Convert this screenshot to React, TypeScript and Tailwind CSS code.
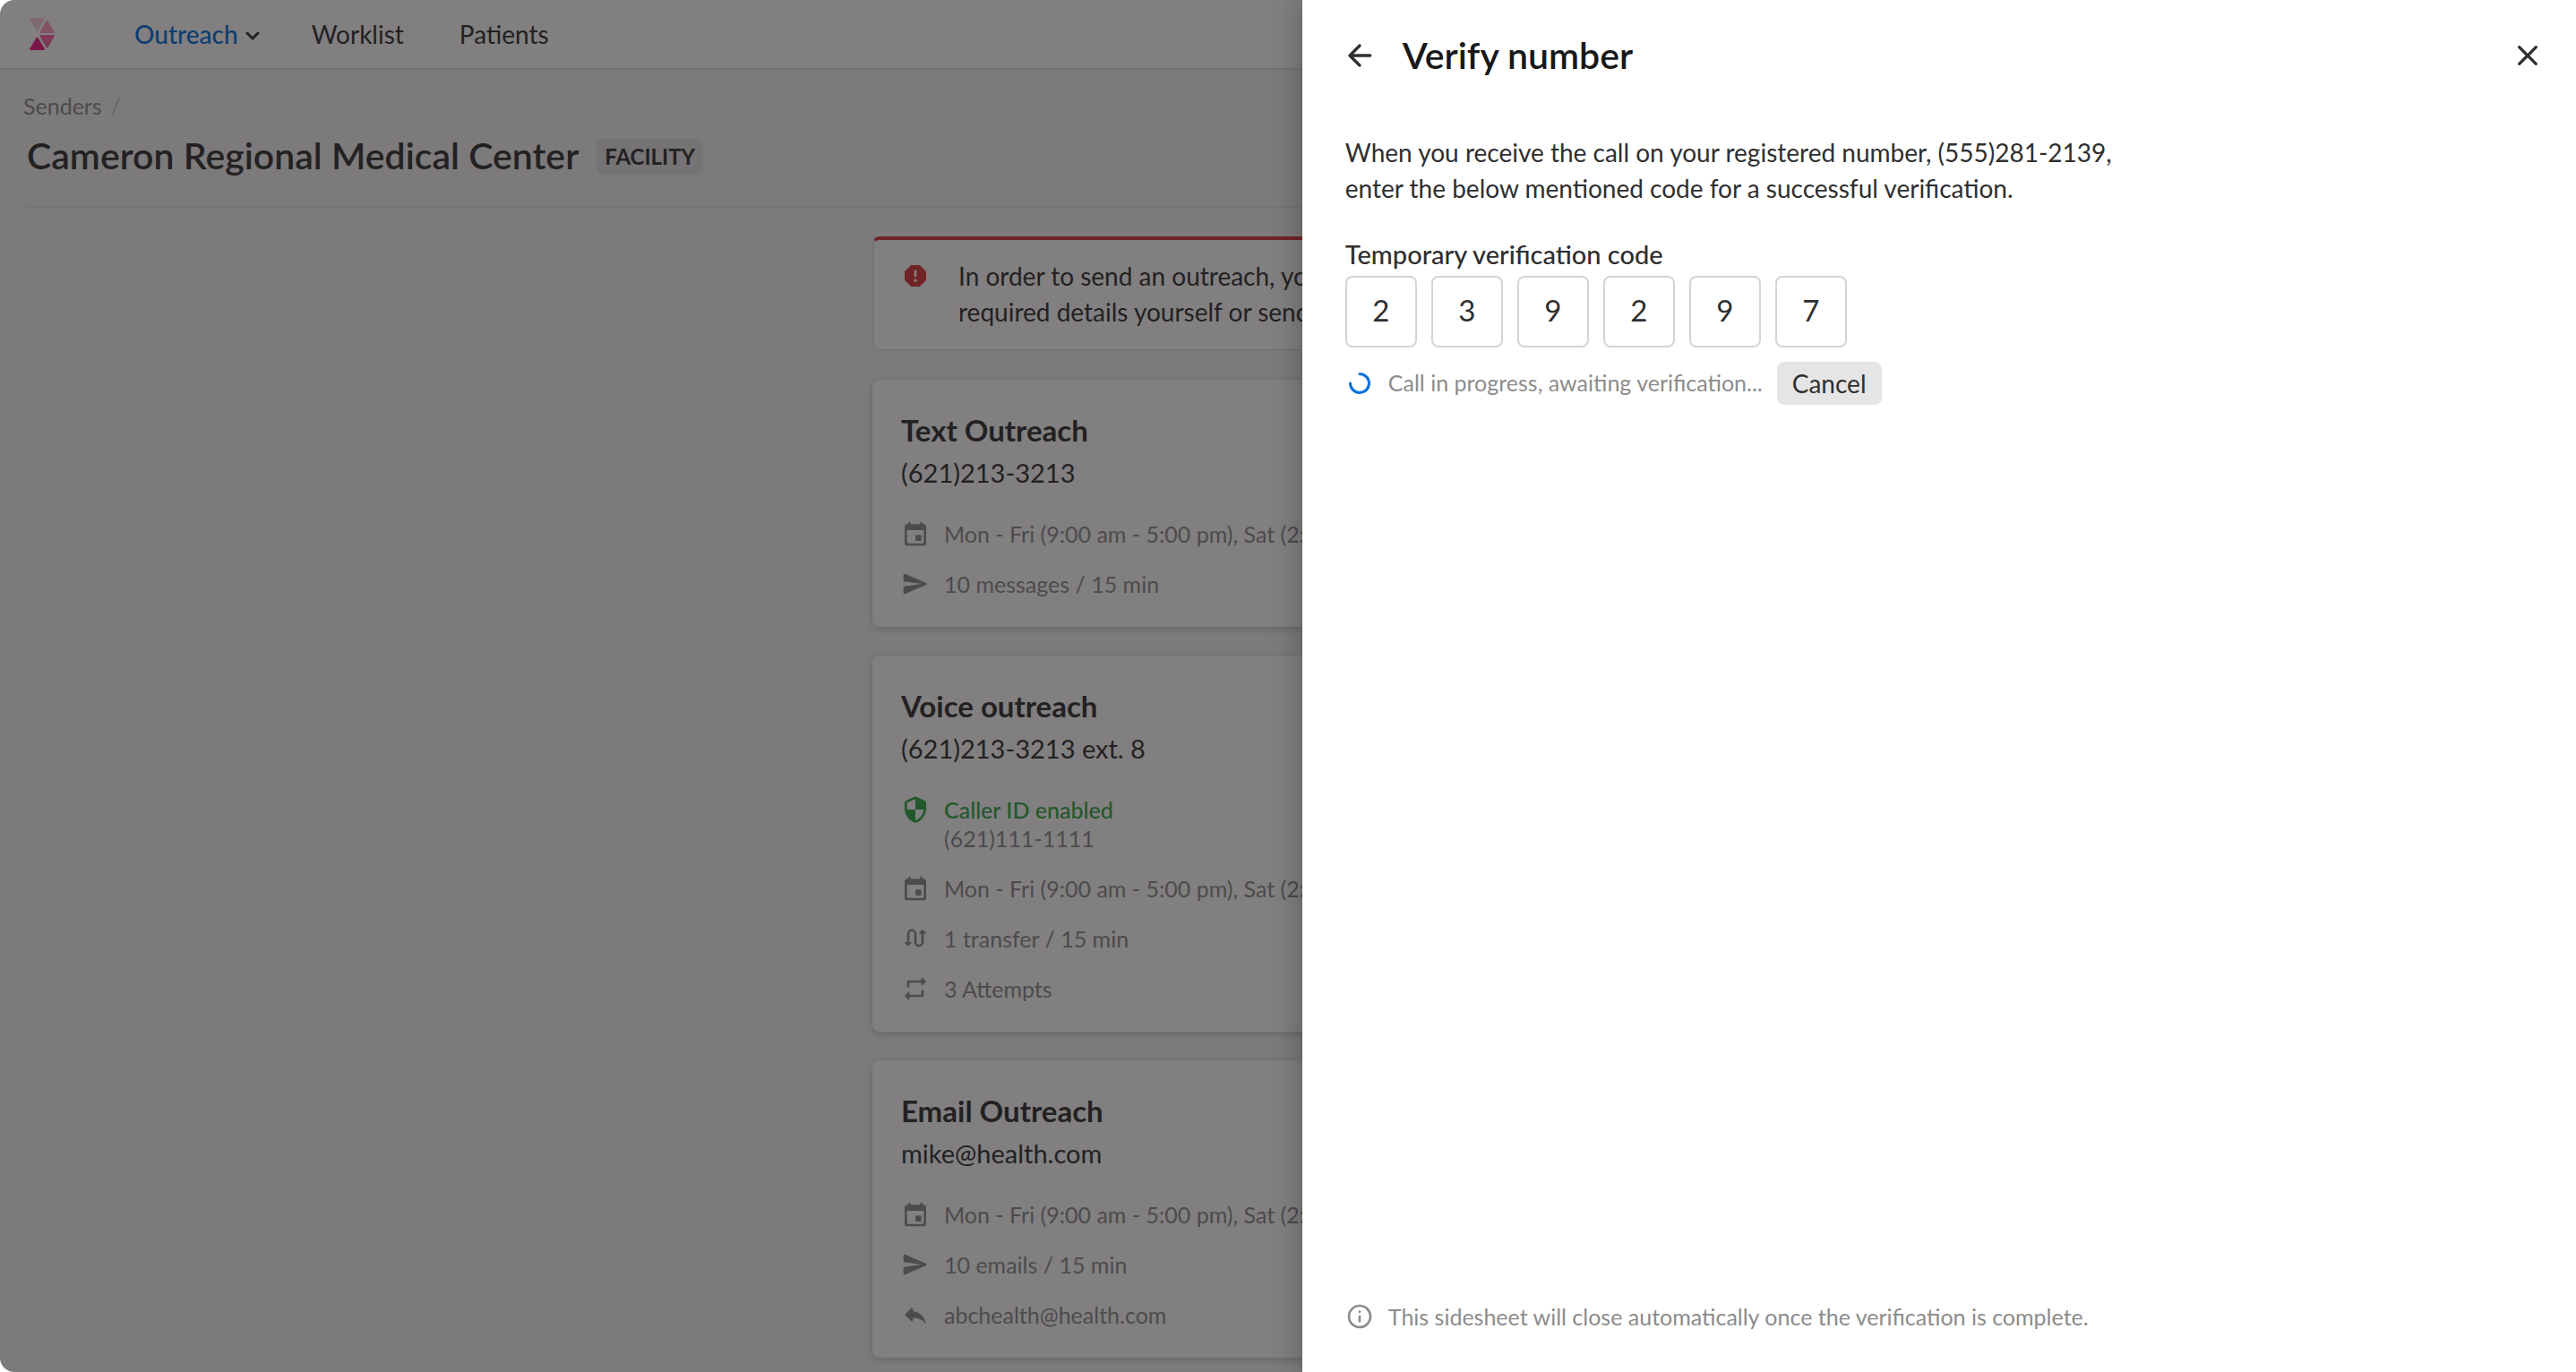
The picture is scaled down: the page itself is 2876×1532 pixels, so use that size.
import type { ReactNode } from 'react';

function Icon({ path, className = 'size-8' }: { path: string; className?: string }) {
  return (
    <svg viewBox="0 0 24 24" fill="currentColor" aria-hidden="true" className={`shrink-0 ${className}`}>
      <path d={path} />
    </svg>
  );
}

const paths = {
  event:
    'M16 13h-3c-.55 0-1 .45-1 1v3c0 .55.45 1 1 1h3c.55 0 1-.45 1-1v-3c0-.55-.45-1-1-1zm0-10v1H8V3c0-.55-.45-1-1-1s-1 .45-1 1v1H5c-1.110 0-1.990.9-1.990 2L3 20c0 1.100.89 2 2 2h14c1.100 0 2-.9 2-2V6c0-1.100-.9-2-2-2h-1V3c0-.55-.45-1-1-1s-1 .45-1 1zm2 17H6c-.55 0-1-.45-1-1V9h14v10c0 .55-.45 1-1 1z',
  send: 'M3.4 20.4l17.45-7.48c.81-.35.81-1.49 0-1.84L3.4 3.6c-.66-.29-1.39.2-1.39.91L2 9.12c0 .5.37.93.87.99L17 12 2.87 13.88c-.5.07-.87.5-.87 1l.01 4.61c0 .71.73 1.2 1.39.91z',
  reply:
    'M10 9V7.41c0-.89-1.08-1.34-1.71-.71L3.7 11.29c-.39.39-.39 1.02 0 1.41l4.59 4.59c.63.63 1.71.19 1.71-.7V14.9c5 0 8.5 1.6 11 5.1-1-5-4-10-11-11z',
  repeat:
    'M7 7h10v1.79c0 .45.54.67.85.35l2.79-2.79c.2-.2.2-.51 0-.71l-2.79-2.79c-.31-.31-.85-.09-.85.36V5H6c-.55 0-1 .45-1 1v4c0 .55.45 1 1 1s1-.45 1-1V7zm10 10H7v-1.79c0-.45-.54-.67-.85-.35l-2.79 2.79c-.2.2-.2.51 0 .71l2.79 2.79c.31.31.85.09.85-.36V19h11c.55 0 1-.45 1-1v-4c0-.55-.45-1-1-1s-1 .45-1 1v3z',
  report:
    'M15.32 3H8.68c-.26 0-.52.11-.7.29L3.29 7.98c-.18.18-.29.44-.29.7v6.63c0 .27.11.52.29.71l4.68 4.68c.19.19.45.3.71.3h6.63c.27 0 .52-.11.71-.29l4.68-4.68c.19-.19.29-.44.29-.71V8.68c0-.27-.11-.52-.29-.71l-4.68-4.68c-.18-.18-.44-.29-.7-.29zM12 17.3c-.72 0-1.3-.58-1.3-1.3s.58-1.3 1.3-1.3 1.3.58 1.3 1.3-.58 1.3-1.3 1.3zm0-4.3c-.55 0-1-.45-1-1V8c0-.55.45-1 1-1s1 .45 1 1v4c0 .55-.45 1-1 1z',
  security:
    'M11.19 1.36l-7 3.11C3.47 4.79 3 5.51 3 6.3V11c0 5.55 3.84 10.74 9 12 5.16-1.26 9-6.45 9-12V6.3c0-.79-.47-1.51-1.19-1.83l-7-3.11c-.51-.23-1.11-.23-1.62 0zM12 11.99h7c-.53 4.12-3.28 7.79-7 8.94V12H5V6.3l7-3.11v8.8z',
  info: 'M12 7c.55 0 1 .45 1 1s-.45 1-1 1-1-.45-1-1 .45-1 1-1zm0 4c.55 0 1 .45 1 1v4c0 .55-.45 1-1 1s-1-.45-1-1v-4c0-.55.45-1 1-1zm0-9C6.48 2 2 6.48 2 12s4.48 10 10 10 10-4.48 10-10S17.52 2 12 2zm0 18c-4.41 0-8-3.59-8-8s3.59-8 8-8 8 3.59 8 8-3.59 8-8 8z',
  back: 'M19 11H7.83l4.88-4.88c.39-.39.39-1.03 0-1.42-.39-.39-1.02-.39-1.41 0l-6.59 6.59c-.39.39-.39 1.02 0 1.41l6.59 6.59c.39.39 1.02.39 1.41 0 .39-.39.39-1.02 0-1.41L7.83 13H19c.55 0 1-.45 1-1s-.45-1-1-1z',
  close:
    'M18.3 5.71c-.39-.39-1.02-.39-1.41 0L12 10.59 7.11 5.7c-.39-.39-1.02-.39-1.41 0-.39.39-.39 1.02 0 1.41L10.59 12 5.7 16.89c-.39.39-.39 1.02 0 1.41.39.39 1.02.39 1.41 0L12 13.41l4.89 4.89c.39.39 1.02.39 1.41 0 .39-.39.39-1.02 0-1.41L13.41 12l4.89-4.89c.38-.38.38-1.02 0-1.4z',
};

function TransferIcon() {
  return (
    <svg viewBox="0 0 24 24" fill="none" aria-hidden="true" className="size-8 shrink-0">
      <path d="M6 16V8a3 3 0 0 1 6 0v7a3 3 0 0 0 6 0V7" stroke="currentColor" strokeWidth="2" />
      <path
        d="M3.6 15h4.8c.5 0 .7.5.35.85l-2.4 2.4c-.2.2-.5.2-.7 0l-2.4-2.4C2.9 15.5 3.1 15 3.6 15zM15.6 8h4.8c.5 0 .7-.5.35-.85l-2.4-2.4c-.2-.2-.5-.2-.7 0l-2.4 2.4c-.35.35-.15.85.35.85z"
        fill="currentColor"
      />
    </svg>
  );
}

function Logo() {
  return (
    <svg viewBox="0 0 30 38" aria-hidden="true" className="h-[38px] w-[30px]" strokeLinejoin="round" strokeWidth="2">
      <path d="M2 2H17L9.5 14.5Z" fill="#ffcfe0" stroke="#ffcfe0" />
      <path d="M20.5 4.5L28 17H13.5Z" fill="#ff9fc4" stroke="#ff9fc4" />
      <path d="M13.5 21H28L20.5 33.5Z" fill="#fb62a6" stroke="#fb62a6" />
      <path d="M9.5 23.5L17 36H2Z" fill="#f41b85" stroke="#f41b85" />
    </svg>
  );
}

function Detail({ icon, children }: { icon: ReactNode; children: ReactNode }) {
  return (
    <li className="flex items-start gap-4">
      {icon}
      <div className="leading-8">{children}</div>
    </li>
  );
}

function Card({ title, contact, children }: { title: string; contact: string; children: ReactNode }) {
  return (
    <section className="rounded-lg bg-white p-8 shadow-[0_2px_8px_rgba(0,0,0,0.2)]">
      <h2 className="text-[33px] leading-12 font-bold text-[#2f2f2f]">{title}</h2>
      <p className="mt-1 text-[29px] leading-10">{contact}</p>
      <ul className="mt-8 flex flex-col gap-6 text-[25px] text-[#8c8c8c]">{children}</ul>
    </section>
  );
}

const hours = 'Mon - Fri (9:00 am - 5:00 pm), Sat (2:00 pm - 5:00 pm)';

function SendersPage() {
  return (
    <div className="min-h-screen bg-[#f4f4f4]">
      <header className="flex items-center border-b-2 border-[#e5e5e5] bg-white px-8">
        <Logo />
        <nav className="ml-[88px] flex h-[76px] items-center text-[28px] leading-10">
          <button type="button" className="flex items-center gap-2 font-medium text-[#0070dd]">
            Outreach
            <svg viewBox="0 0 16 10" aria-hidden="true" className="mt-1 h-2.5 w-4 text-[#2f2f2f]" fill="none">
              <path d="M2 2l6 6 6-6" stroke="currentColor" strokeWidth="3" strokeLinecap="round" strokeLinejoin="round" />
            </svg>
          </button>
          <a href="#worklist" className="ml-[58px]">Worklist</a>
          <a href="#patients" className="ml-[62px]">Patients</a>
        </nav>
      </header>

      <div className="px-[30px] pt-6">
        <nav aria-label="Breadcrumb" className="-ml-1 flex gap-2.5 text-[25px] leading-8 text-[#8c8c8c]">
          <a href="#senders">Senders</a>
          <span className="text-[#c8c8c8]">/</span>
        </nav>
        <div className="mt-5 flex items-center gap-5 border-b-2 border-[#e5e5e5] pb-[34px]">
          <h1 className="pb-0.5 text-[41px] leading-10 font-semibold">Cameron Regional Medical Center</h1>
          <span className="rounded-lg bg-[#e5e5e5] px-[9px] text-2xl leading-10 font-bold">FACILITY</span>
        </div>
      </div>

      <main className="mx-auto mt-8 flex max-w-[928px] flex-col gap-8 pb-4">
        <div
          role="alert"
          className="flex items-start gap-8 rounded-lg border-2 border-t-4 border-[#e5e5e5] border-t-[#d93737] bg-white px-[30px] pt-5 pb-[22px] text-[28px] leading-10"
        >
          <Icon path={paths.report} className="mt-1 size-8 text-[#d93737]" />
          <p>
            In order to send an outreach, you need to fill in the
            <br />
            required details yourself or send a request.
          </p>
        </div>

        <Card title="Text Outreach" contact="(621)213-3213">
          <Detail icon={<Icon path={paths.event} />}>{hours}</Detail>
          <Detail icon={<Icon path={paths.send} />}>10 messages / 15 min</Detail>
        </Card>

        <Card title="Voice outreach" contact="(621)213-3213 ext. 8">
          <Detail icon={<Icon path={paths.security} className="size-8 text-[#2ea843]" />}>
            <p className="font-medium text-[#2ea843]">Caller ID enabled</p>
            <p>(621)111-1111</p>
          </Detail>
          <Detail icon={<Icon path={paths.event} />}>{hours}</Detail>
          <Detail icon={<TransferIcon />}>1 transfer / 15 min</Detail>
          <Detail icon={<Icon path={paths.repeat} />}>3 Attempts</Detail>
        </Card>

        <Card title="Email Outreach" contact="mike@health.com">
          <Detail icon={<Icon path={paths.event} />}>{hours}</Detail>
          <Detail icon={<Icon path={paths.send} />}>10 emails / 15 min</Detail>
          <Detail icon={<Icon path={paths.reply} />}>abchealth@health.com</Detail>
        </Card>
      </main>
    </div>
  );
}

const code = ['2', '3', '9', '2', '9', '7'];

function VerifySheet() {
  return (
    <aside
      role="dialog"
      aria-labelledby="sheet-title"
      className="flex w-[49.45%] flex-col bg-white pt-[38px] pr-[34px] pb-[46px] pl-12 shadow-[0_0_32px_rgba(0,0,0,0.3)]"
    >
      <header className="flex items-center">
        <button type="button" aria-label="Back" className="-ml-1">
          <Icon path={paths.back} className="size-10" />
        </button>
        <h2 id="sheet-title" className="ml-7 text-[41px] leading-12 font-semibold text-[#181818]">
          Verify number
        </h2>
        <button type="button" aria-label="Close" className="ml-auto">
          <Icon path={paths.close} className="size-10" />
        </button>
      </header>

      <p className="mt-16 max-w-[920px] text-[28px] leading-10">
        When you receive the call on your registered number, (555)281-2139,
        <br />
        enter the below mentioned code for a successful verification.
      </p>

      <fieldset className="mt-[34px]">
        <legend className="text-[29px] leading-10 font-medium">Temporary verification code</legend>
        <div className="mt-1 flex gap-4">
          {code.map((digit, i) => (
            <input
              key={i}
              type="text"
              readOnly
              aria-label={`Digit ${i + 1}`}
              value={digit}
              className="size-20 rounded-lg border-2 border-[#d5d5d5] bg-white pb-1 text-center text-[33px]"
            />
          ))}
        </div>
      </fieldset>

      <div className="mt-4 flex items-center gap-4">
        <svg viewBox="0 0 32 32" fill="none" aria-hidden="true" className="size-8 shrink-0">
          <path d="M16 5.5A10.5 10.5 0 1 1 5.500 16" stroke="#0070dd" strokeWidth="3" strokeLinecap="round" />
        </svg>
        <p role="status" className="pb-0.5 text-[25px] leading-8 text-[#8c8c8c]">
          Call in progress, awaiting verification...
        </p>
        <button type="button" className="h-12 rounded-lg bg-[#e5e5e5] px-[17px] text-[28px] leading-10">
          Cancel
        </button>
      </div>

      <footer className="mt-auto flex items-center gap-4 text-[25px] leading-8 text-[#8c8c8c]">
        <Icon path={paths.info} />
        <p>This sidesheet will close automatically once the verification is complete.</p>
      </footer>
    </aside>
  );
}

export default function App() {
  return (
    <div className="relative h-screen overflow-hidden rounded-l-2xl font-['Lato','Open_Sans',sans-serif] text-[#2f2f2f]">
      <SendersPage />
      <div className="absolute inset-0 flex justify-end bg-[#1a1617]/55">
        <VerifySheet />
      </div>
    </div>
  );
}
